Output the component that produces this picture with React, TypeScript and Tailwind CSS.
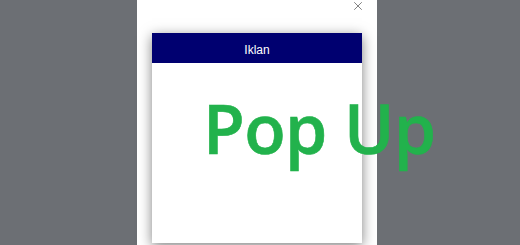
import { X } from "lucide-react";

export default function App() {
  return (
    <div className="relative flex h-[245px] w-[520px] overflow-hidden bg-[#6c6f74] pl-[137px] font-['Liberation_Sans',sans-serif]">
      {/* Modal panel */}
      <div className="relative flex h-full w-[240px] flex-col bg-white pl-[15px] pt-[33px]">
        <button className="absolute right-[12px] top-[-1px] text-[#7a7a7a]">
          <X className="h-[14px] w-[14px]" strokeWidth={1.6} />
        </button>

        <div className="flex h-[210px] w-[210px] flex-col bg-white shadow-[0_3px_12px_rgba(0,0,0,0.5)]">
          <div className="flex h-[30px] items-center justify-center bg-[#000070] pt-[3px] text-[12px] text-white">
            Iklan
          </div>
          <div className="flex-1 bg-white" />
        </div>
      </div>

      {/* Overlay title */}
      <div className="absolute left-[203px] top-[94px] font-['Open_Sans',sans-serif] text-[68px] font-semibold leading-none tracking-[-0.6px] text-[#22b24c] [-webkit-text-stroke:0.6px_#22b24c]">
        Pop Up
      </div>
    </div>
  );
}
